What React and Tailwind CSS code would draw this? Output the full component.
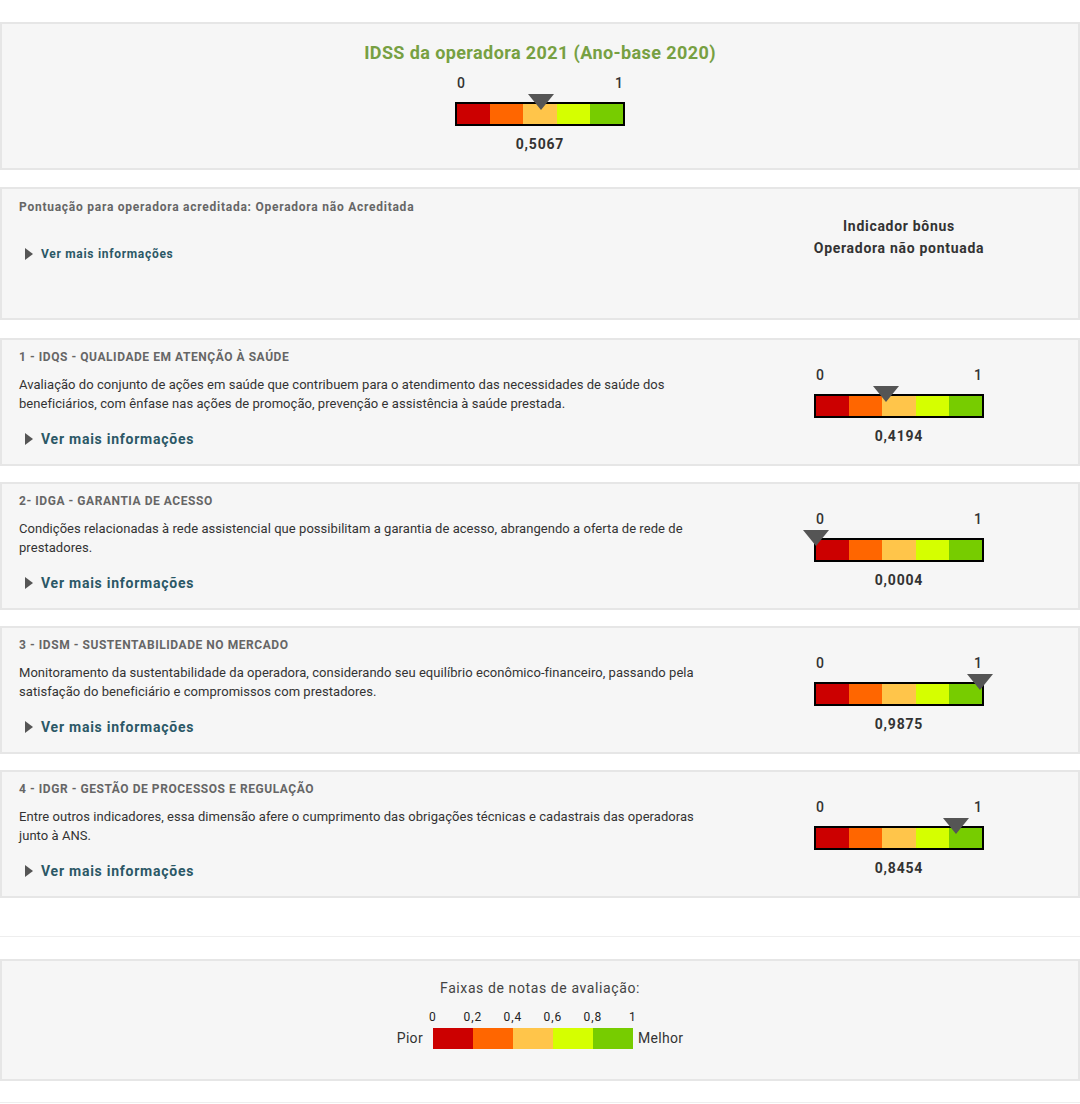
const segs = ["#cc0000", "#ff6600", "#ffc54a", "#d5ff00", "#77cc00"];

const dims = [
  {
    title: "1 - IDQS - QUALIDADE EM ATENÇÃO À SAÚDE",
    desc: "Avaliação do conjunto de ações em saúde que contribuem para o atendimento das necessidades de saúde dos beneficiários, com ênfase nas ações de promoção, prevenção e assistência à saúde prestada.",
    value: 0.4194,
  },
  {
    title: "2- IDGA - GARANTIA DE ACESSO",
    desc: "Condições relacionadas à rede assistencial que possibilitam a garantia de acesso, abrangendo a oferta de rede de prestadores.",
    value: 0.0004,
  },
  {
    title: "3 - IDSM - SUSTENTABILIDADE NO MERCADO",
    desc: "Monitoramento da sustentabilidade da operadora, considerando seu equilíbrio econômico-financeiro, passando pela satisfação do beneficiário e compromissos com prestadores.",
    value: 0.9875,
  },
  {
    title: "4 - IDGR - GESTÃO DE PROCESSOS E REGULAÇÃO",
    desc: "Entre outros indicadores, essa dimensão afere o cumprimento das obrigações técnicas e cadastrais das operadoras junto à ANS.",
    value: 0.8454,
  },
];

const fmt = (v) => v.toFixed(4).replace(".", ",");

const Gauge = ({ value }) => (
  <div className="flex flex-col items-center">
    <div className="w-[170px] flex justify-between px-[2px] text-[14px] leading-4 font-medium text-[#333]">
      <span>0</span>
      <span>1</span>
    </div>
    <div className="relative mt-[11px] w-[170px] h-6 border-2 border-black flex">
      {segs.map((c) => (
        <div key={c} className="flex-1 h-full" style={{ backgroundColor: c }}></div>
      ))}
      <div
        className="absolute top-[-10px] w-0 h-0 border-x-[13px] border-x-transparent border-t-[16px] border-t-[#555] -translate-x-1/2"
        style={{ left: `${value * 166}px` }}
      ></div>
    </div>
    <div className="mt-[10px] text-[14px] leading-4 font-bold tracking-[0.8px] text-[#333]">
      {fmt(value)}
    </div>
  </div>
);

const VerMais = ({ small }) => (
  <div className="flex items-center gap-2 pl-[6px]">
    <span className="w-0 h-0 border-y-[6px] border-y-transparent border-l-[8px] border-l-[#555]"></span>
    <span
      className={
        small
          ? "text-[12px] leading-4 font-bold tracking-[0.7px] text-[#2b5866]"
          : "text-[14px] leading-5 font-bold tracking-[0.75px] text-[#2b5866]"
      }
    >
      Ver mais informações
    </span>
  </div>
);

const App = () => {
  return (
    <div className="w-[1080px] bg-white pt-[22px] font-[Roboto] text-[#333]">
      <div className="border-2 border-[#e6e6e6] bg-[#f6f6f6] h-[148px] flex flex-col items-center pt-[17px]">
        <h1 className="text-[18px] leading-6 font-bold tracking-[0.4px] text-[#77a042]">
          IDSS da operadora 2021 (Ano-base 2020)
        </h1>
        <div className="mt-[10px]">
          <Gauge value={0.5067} />
        </div>
      </div>

      <div className="mt-[17px] border-2 border-[#e6e6e6] bg-[#f6f6f6] h-[133px] flex">
        <div className="flex-1 pl-[17px] pt-[10px]">
          <p className="text-[12px] leading-4 font-bold tracking-[0.75px] text-[#666]">
            Pontuação para operadora acreditada: Operadora não Acreditada
          </p>
          <div className="mt-[31px]">
            <VerMais small />
          </div>
        </div>
        <div className="w-[358px] pt-[26px] text-center text-[14px] leading-[22px] font-bold tracking-[0.7px] text-[#333]">
          <p>Indicador bônus</p>
          <p>Operadora não pontuada</p>
        </div>
      </div>

      <div className="mt-[18px] flex flex-col gap-4">
        {dims.map((d) => (
          <div
            key={d.title}
            className="border-2 border-[#e6e6e6] bg-[#f6f6f6] h-[128px] flex"
          >
            <div className="flex-1 pl-[17px] pt-[9px] pr-4">
              <p className="text-[12px] leading-4 font-bold tracking-[0.55px] text-[#666]">
                {d.title}
              </p>
              <p className="mt-[10px] max-w-[690px] text-[13px] leading-[19px] tracking-[0.05px] text-[#333]">
                {d.desc}
              </p>
              <div className="mt-[16px]">
                <VerMais />
              </div>
            </div>
            <div className="w-[358px] flex justify-center pt-[27px]">
              <Gauge value={d.value} />
            </div>
          </div>
        ))}
      </div>

      <div className="mt-[38px] border-t border-[#eeeeee]"></div>

      <div className="mt-[22px] border-2 border-[#e6e6e6] bg-[#f6f6f6] h-[122px] flex flex-col items-center pt-[19px]">
        <p className="text-[14px] leading-4 tracking-[0.6px] text-[#444]">
          Faixas de notas de avaliação:
        </p>
        <div className="mt-[13px] flex items-end">
          <span className="text-[14px] leading-4 tracking-[0.3px] text-[#333] mb-[3px] mr-[10px]">
            Pior
          </span>
          <div className="flex flex-col">
            <div className="flex -mx-5 text-[12px] leading-4 tracking-[1px] text-[#222]">
              {["0", "0,2", "0,4", "0,6", "0,8", "1"].map((l) => (
                <span key={l} className="w-10 text-center">
                  {l}
                </span>
              ))}
            </div>
            <div className="mt-[3px] flex h-[21px]">
              {segs.map((c) => (
                <div key={c} className="w-10 h-full" style={{ backgroundColor: c }}></div>
              ))}
            </div>
          </div>
          <span className="text-[14px] leading-4 tracking-[0.3px] text-[#333] mb-[3px] ml-[5px]">
            Melhor
          </span>
        </div>
      </div>

      <div className="mt-[21px] border-t border-[#eeeeee] h-[2px]"></div>
    </div>
  );
};

export default App;
